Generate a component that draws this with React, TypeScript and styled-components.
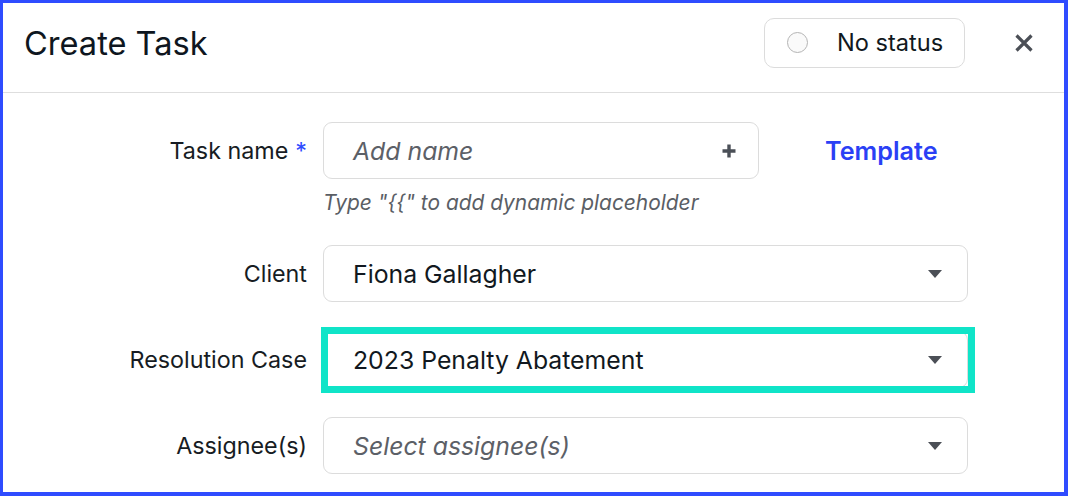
import React from "react";
import styled, { createGlobalStyle } from "styled-components";

const GlobalStyle = createGlobalStyle`
  html, body { margin: 0; padding: 0; background: #ffffff; }
  body { font-family: Inter, "Noto Sans", "Liberation Sans", sans-serif; }
  * { box-sizing: border-box; }
`;

const Frame = styled.div`
  width: 1068px;
  height: 496px;
  border-style: solid;
  border-color: #2f4cff;
  border-width: 3px 4px 4px 3px;
  background: #ffffff;
  overflow: hidden;
  display: flex;
  flex-direction: column;
`;

const Header = styled.header`
  height: 90px;
  flex: none;
  display: flex;
  align-items: center;
  padding: 0 31px 10px 21px;
  border-bottom: 1px solid #dedede;
`;

const Title = styled.h1`
  margin: 0;
  flex: 1;
  font-size: 32.6px;
  font-weight: 400;
  color: #0e1620;
`;

const StatusButton = styled.button`
  width: 201px;
  height: 50px;
  display: flex;
  align-items: center;
  gap: 29px;
  padding: 0 0 0 22px;
  border: 1px solid #dcdcdc;
  border-radius: 10px;
  background: #ffffff;
  font-family: inherit;
  font-size: 23.6px;
  color: #111820;
`;

const StatusDot = styled.span`
  width: 21px;
  height: 21px;
  border-radius: 50%;
  border: 1px solid #b4b4b4;
  background: #fafafa;
  flex: none;
`;

const CloseButton = styled.button`
  margin-left: 50px;
  width: 18px;
  height: 18px;
  padding: 0;
  border: 0;
  background: transparent;
  display: flex;
  align-items: center;
  justify-content: center;
`;

const Body = styled.div`
  display: flex;
  flex-direction: column;
  padding-top: 29px;
  gap: 29px;
`;

const Row = styled.div`
  display: grid;
  grid-template-columns: 304px auto;
  column-gap: 16px;
  align-items: start;
`;

const Label = styled.label`
  height: 57px;
  display: flex;
  align-items: center;
  justify-content: flex-end;
  font-size: 23.3px;
  color: #171c23;
  white-space: nowrap;
`;

const Required = styled.span`
  color: #2f4cff;
  margin-left: 7px;
`;

const FieldColumn = styled.div`
  display: flex;
  flex-direction: column;
`;

const InputLine = styled.div`
  display: flex;
  align-items: center;
  gap: 66px;
`;

const Box = styled.div<{ $width: number }>`
  position: relative;
  width: ${(p) => p.$width}px;
  height: 57px;
  border: 1px solid #dcdcdc;
  border-radius: 9px;
  display: flex;
  align-items: center;
  padding: 0 22px 0 29px;
  background: #ffffff;
`;

const Value = styled.span<{ $placeholder?: boolean }>`
  flex: 1;
  font-size: 24.8px;
  font-style: ${(p) => (p.$placeholder ? "italic" : "normal")};
  color: ${(p) => (p.$placeholder ? "#5c6067" : "#111820")};
  white-space: nowrap;
`;

const TemplateLink = styled.a`
  font-size: 25.2px;
  font-weight: 600;
  color: #2a40f5;
  text-decoration: none;
  cursor: pointer;
`;

const Hint = styled.div`
  margin-top: 12px;
  height: 25px;
  line-height: 24px;
  font-size: 20.9px;
  font-style: italic;
  color: #5a5e65;
  white-space: nowrap;
`;

const Caret = styled.span`
  width: 0;
  height: 0;
  margin-right: 3px;
  border-left: 7.5px solid transparent;
  border-right: 7.5px solid transparent;
  border-top: 8px solid #4b4f56;
`;

const Highlight = styled.span`
  position: absolute;
  left: -3px;
  top: -5px;
  right: -8px;
  bottom: -6px;
  border: 7px solid #10e4c8;
  pointer-events: none;
`;

const PlusIcon = () => (
  <svg width="14" height="14" viewBox="0 0 14 14" aria-hidden="true">
    <path d="M7 0.5v13M0.5 7h13" stroke="#4a4f57" strokeWidth="3.4" />
  </svg>
);

const CloseIcon = () => (
  <svg width="18" height="18" viewBox="0 0 18 18" aria-hidden="true">
    <path d="M1.5 1.5l15 15M16.5 1.5l-15 15" stroke="#4b4f56" strokeWidth="3.2" />
  </svg>
);

export default function App() {
  return (
    <>
      <GlobalStyle />
      <Frame>
        <Header>
          <Title>Create Task</Title>
          <StatusButton>
            <StatusDot />
            No status
          </StatusButton>
          <CloseButton aria-label="Close">
            <CloseIcon />
          </CloseButton>
        </Header>
        <Body>
          <Row>
            <Label>
              Task name<Required>*</Required>
            </Label>
            <FieldColumn>
              <InputLine>
                <Box $width={436}>
                  <Value $placeholder>Add name</Value>
                  <PlusIcon />
                </Box>
                <TemplateLink>Template</TemplateLink>
              </InputLine>
              <Hint>Type "{"{{"}" to add dynamic placeholder</Hint>
            </FieldColumn>
          </Row>
          <Row>
            <Label>Client</Label>
            <Box $width={645}>
              <Value>Fiona Gallagher</Value>
              <Caret />
            </Box>
          </Row>
          <Row>
            <Label>Resolution Case</Label>
            <Box $width={645}>
              <Value>2023 Penalty Abatement</Value>
              <Caret />
              <Highlight />
            </Box>
          </Row>
          <Row>
            <Label>Assignee(s)</Label>
            <Box $width={645}>
              <Value $placeholder>Select assignee(s)</Value>
              <Caret />
            </Box>
          </Row>
        </Body>
      </Frame>
    </>
  );
}
